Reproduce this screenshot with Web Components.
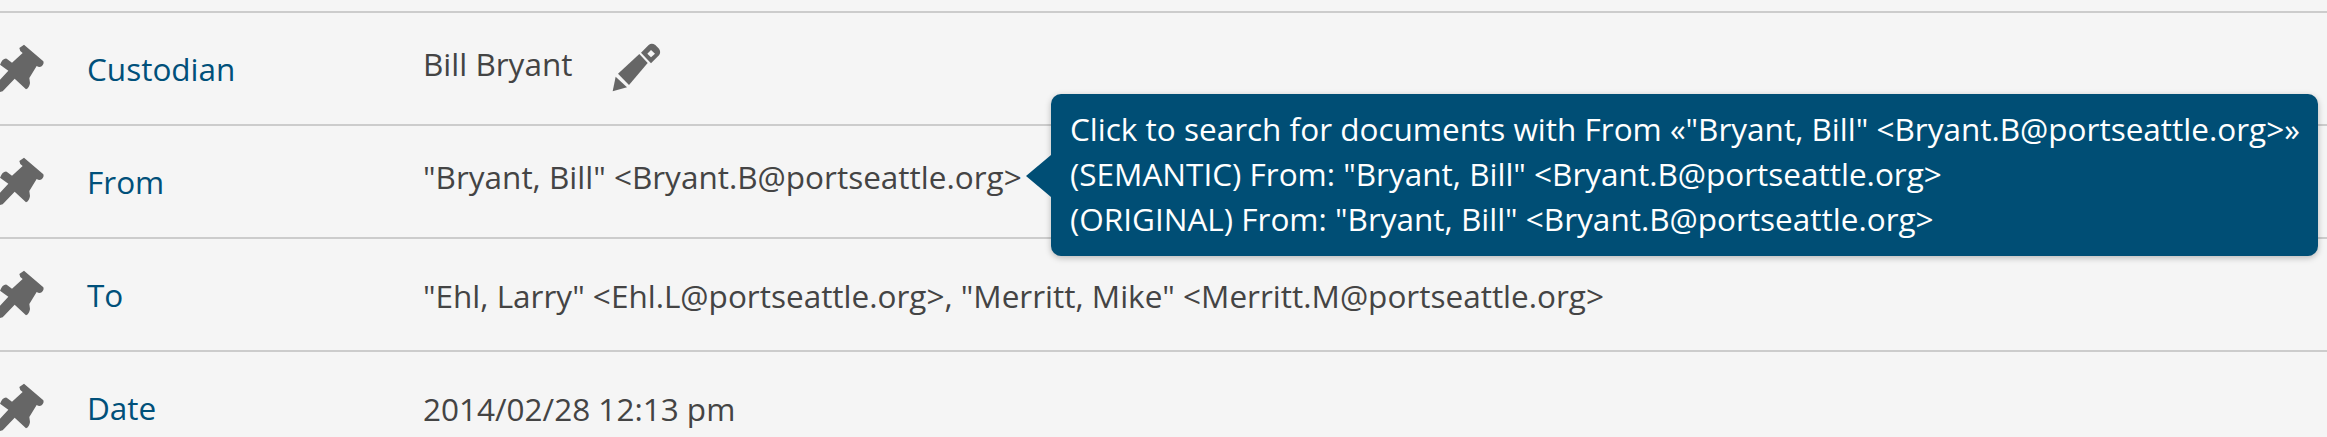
<!DOCTYPE html>
<html>
<head>
<meta charset="utf-8">
<style>
  html, body { margin: 0; height: 100%; overflow: hidden; background: #f5f5f5; }
  body { font-family: "Open Sans", sans-serif; font-size: 31.5px; color: #444; }
  meta-list { padding-top: 11px; }
</style>
</head>
<body>
<meta-list>
  <meta-row label="Custodian" raised><span>Bill Bryant</span><pencil-icon></pencil-icon></meta-row>
  <meta-row label="From" raised>
    <span>"Bryant, Bill" &lt;Bryant.B@portseattle.org&gt;</span>
    <search-tip>
      <div>Click to search for documents with From «"Bryant, Bill" &lt;Bryant.B@portseattle.org&gt;»</div>
      <div>(SEMANTIC) From: "Bryant, Bill" &lt;Bryant.B@portseattle.org&gt;</div>
      <div>(ORIGINAL) From: "Bryant, Bill" &lt;Bryant.B@portseattle.org&gt;</div>
    </search-tip>
  </meta-row>
  <meta-row label="To"><span>"Ehl, Larry" &lt;Ehl.L@portseattle.org&gt;, "Merritt, Mike" &lt;Merritt.M@portseattle.org&gt;</span></meta-row>
  <meta-row label="Date"><span>2014/02/28 12:13 pm</span></meta-row>
</meta-list>

<script>
class MetaList extends HTMLElement {
  constructor() {
    super();
    this.attachShadow({ mode: 'open' });
  }

  connectedCallback() {
    this.shadowRoot.innerHTML = `
      <style>
        :host { display: block; }
      </style>
      <slot></slot>
    `;
  }
}

class MetaRow extends HTMLElement {
  constructor() {
    super();
    this.attachShadow({ mode: 'open' });
  }

  connectedCallback() {
    const label = this.getAttribute('label');
    this.shadowRoot.innerHTML = `
      <style>
        :host {
          display: grid;
          grid-template-columns: 87px 336px 1fr;
          align-items: center;
          height: 113px;
          box-sizing: border-box;
          border-top: 2px solid #ccc;
          position: relative;
        }
        svg { display: block; width: 60px; height: 70px; margin-top: -12px; }
        .label { color: #00507a; margin-top: 0; }
        .value { display: flex; margin-top: 1px; white-space: nowrap; }
        :host([raised]) .value { margin-top: -10px; }
      </style>
      <svg viewBox="0 0 180 210" fill="#666">
        <path d="M72 50 L130 100 Q133 108 125 115 Q118 120 110 114 L88 150 L90 165 Q88 180 78 184 L44 152 L8 190 L0 192 L0 155 L25 128 L0 110 Q8 90 20 92 L36 104 L68 75 Q58 68 58 60 Z"/>
      </svg>
      <div class="label">${label}</div>
      <div class="value"><slot></slot></div>
    `;
  }
}

class PencilIcon extends HTMLElement {
  constructor() {
    super();
    this.attachShadow({ mode: 'open' });
  }

  connectedCallback() {
    this.shadowRoot.innerHTML = `
      <style>
        :host { display: block; width: 70px; height: 43px; margin-left: 28px; }
        svg { display: block; width: 70px; height: 70px; margin-top: -12px; }
      </style>
      <svg viewBox="0 0 210 210" fill="#666">
        <path d="M38 184 L47 140 L81 172 Z"/>
        <path d="M54 131 L118 72 L143 99 L87 165 Z"/>
        <path fill-rule="evenodd" d="M123 68 L146 45 Q155 38 166 45 L177 56 Q184 66 177 76 L153 100 Z M153 60 L142 71 L153 82 L165 71 Z"/>
      </svg>
    `;
  }
}

class SearchTip extends HTMLElement {
  constructor() {
    super();
    this.attachShadow({ mode: 'open' });
  }

  connectedCallback() {
    this.shadowRoot.innerHTML = `
      <style>
        :host {
          position: absolute;
          z-index: 1;
          left: 1051px;
          top: -32px;
          width: 1267px;
          height: 162px;
          box-sizing: border-box;
          padding: 12px 19px;
          background: #004e75;
          color: #fff;
          border-radius: 10px;
          line-height: 45px;
          box-shadow: 0 2px 6px rgba(0, 0, 0, .25);
        }
        .arrow {
          position: absolute;
          left: -25px;
          top: 61px;
          width: 25px;
          height: 42px;
          background: #004e75;
          clip-path: polygon(100% 0, 0 50%, 100% 100%);
        }
      </style>
      <div class="arrow"></div>
      <slot></slot>
    `;
  }
}

customElements.define('meta-list', MetaList);
customElements.define('meta-row', MetaRow);
customElements.define('pencil-icon', PencilIcon);
customElements.define('search-tip', SearchTip);
</script>
</body>
</html>
